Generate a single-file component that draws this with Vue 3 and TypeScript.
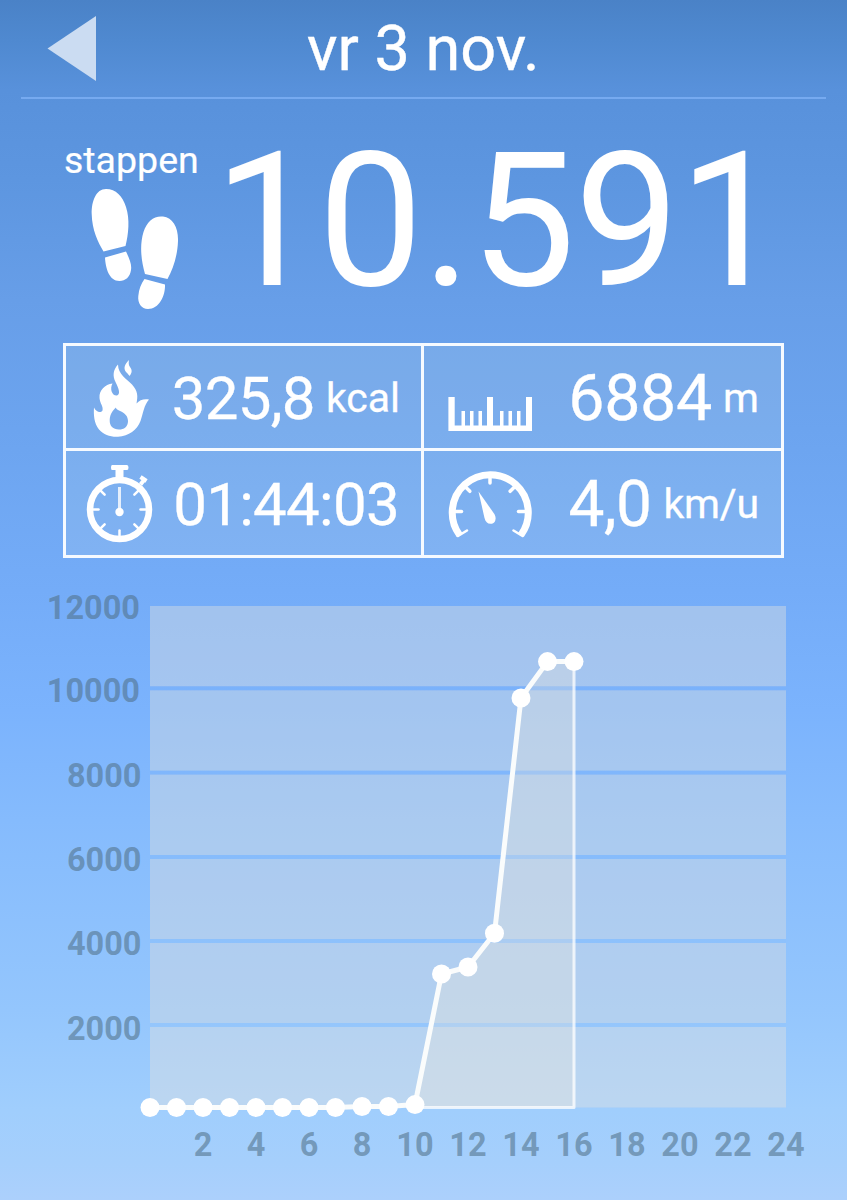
<script setup lang="ts">
interface Point { x: number; y: number }

const yLabels: { text: string; x: number; y: number }[] = [
  { text: '12000', x: 140, y: 618.5 },
  { text: '10000', x: 140, y: 702 },
  { text: '8000', x: 141.5, y: 786.5 },
  { text: '6000', x: 141.5, y: 871 },
  { text: '4000', x: 141.5, y: 955 },
  { text: '2000', x: 141.5, y: 1039.5 },
]
const hours: number[] = [2, 4, 6, 8, 10, 12, 14, 16, 18, 20, 22, 24]
const hourX = (h: number): number => 150 + h * 26.5

const bands: number[][] = [
  [606, 686.3], [690.3, 770.6], [774.6, 855], [859, 939], [943, 1023], [1027, 1107.5],
]
const levels: number[] = [
  1107.5, 1107.5, 1107.5, 1107.5, 1107.5, 1107.5, 1107.5, 1107.5, 1106.5, 1106.5,
  1104.6, 974, 967, 933.3, 698, 661.6, 661.6,
]
const points: Point[] = levels.map((y, h) => ({ x: hourX(h), y }))
const line: string = points.map(p => `${p.x},${p.y}`).join(' ')
const area: string = `${line} 574,1107.5 150,1107.5`
const dialTicks: number[] = [45, 90, 135, 180, 225, 270, 315]
const gaugeTicks: number[] = [-90, -45, 0, 45, 90]
</script>

<template>
  <main class="screen">
    <header class="header">
      <svg class="back" width="50" height="66" viewBox="0 0 50 66"><path d="M0.5 32.5 49 0V65Z" /></svg>
      <h1>vr 3 nov.</h1>
    </header>

    <section class="steps">
      <div class="steps-side">
        <span class="steps-label">stappen</span>
        <svg class="feet" width="90" height="122" viewBox="90 187 90 122">
          <path d="M106 189C96 189 91.500 201 91.700 214C92 230 98 242 103.500 251.500L125.500 246C128.500 234 130 219 126 207C122.500 196 116 189 106 189Z" />
          <path d="M105 257.500L126 251.500C129 258 132 264 131 270C130 277 125.500 281 119.500 281C109 281 105.500 268 105 257.500Z" />
          <path d="M163 216.500C173 217.500 178.500 228 178 241C177.500 256 173 269 167.500 279L145 274C141 260 139.500 245 143.500 232C147 221 154 215.500 163 216.500Z" />
          <path d="M144.500 279L165 284.500C165.500 296 159 309 148 309C141.500 309 137.500 303 138.300 296C139 289 141 284 144.500 279Z" />
        </svg>
      </div>
      <span class="total">10.591</span>
    </section>

    <section class="stats">
      <div class="cell">
        <svg class="icon" width="90" height="102" viewBox="66 346 90 102">
          <path fill-rule="evenodd" d="M118 364.500C113 370 112.500 376 115.500 382C118.500 388 121 394 117 395.500C112 396 109.500 389 112.500 383.500C105 384.500 99 390 99.500 398C100 404 103.500 406 102.500 410.500C100.500 413.500 96 412 94 407.500C93.500 415 94 423 99 429.500C104 435 110 437 118 436.700C129 436 137 430 140.500 421C143 414 144 405 149 399.500C144 398.500 139.500 400 136.500 403.500C138 396 138 391 132 384.500C127 379.500 118 374 118 364.500ZM116 407.500C115.500 411 128 411 128 421C128 427 124 429.500 119 429.500C113 429.500 109.500 426 109.700 420C110 414 113 410 116 407.500Z" />
          <path d="M129 360C125 364 123 368 126 372C128 374 129 375 129.500 376C132 373 132.500 370 130 367C128.500 365 128.500 363 129 360Z" />
        </svg>
        <span class="value v60">325,8</span><span class="unit kcal">kcal</span>
      </div>
      <div class="cell">
        <svg class="icon" width="115" height="102" viewBox="424 346 115 102">
          <path d="M448.400 397H454.700V425.500H461.500V411H465V425.500H470V411H473.500V425.500H478.500V411H482V425.500H487V397H493V425.500H500V411H503.500V425.500H508.500V411H512V425.500H517V411H520.500V425.500H526V397H532V431H448.400Z" />
        </svg>
        <span class="value v65">6884</span><span class="unit metre">m</span>
      </div>
      <div class="cell">
        <svg class="icon" width="90" height="104" viewBox="66 451 90 104">
          <circle cx="119.500" cy="509.500" r="29.500" class="ring" />
          <path d="M112 465H127Q128.500 465 128.500 467.500T127 470H123.500V479H115.500V470H112Q111 470 111 467.500T112 465Z" />
          <path class="stroke4" d="M140.500 484.500 144 480M140.500 477 146.500 481" />
          <path v-for="a in dialTicks" :key="a" class="tick" d="M119.500 482V488.500" :transform="`rotate(${a} 119.500 509.500)`" />
          <path class="hand" d="M119.500 487V509" />
          <circle cx="119.500" cy="512" r="4.200" />
        </svg>
        <span class="value v60 clock">01:44:03</span>
      </div>
      <div class="cell">
        <svg class="icon" width="115" height="104" viewBox="424 451 115 104">
          <path class="gauge" d="M459.500 535A38 38 0 1 1 521 535" />
          <path class="tick" d="M458 536 467 530.500M522.500 536 513.500 530.500" />
          <path v-for="a in gaugeTicks" :key="a" class="gtick" d="M490 475V483" :transform="`rotate(${a} 490 511.500)`" />
          <path d="M478.500 491.500 494 513.500C497 518 495.500 523 492 523.700C488 524.500 485.500 522 484.500 518Z" />
        </svg>
        <span class="value v64">4,0</span><span class="unit speed">km/u</span>
      </div>
    </section>

    <svg class="chart" width="847" height="642" viewBox="0 558 847 642">
      <rect v-for="b in bands" :key="b[0]" class="band" x="150" :y="b[0]" width="636" :height="b[1] - b[0]" />
      <rect class="gap" x="150" y="686" width="636" height="341" />
      <polygon class="area" :points="area" />
      <path class="edge" d="M574 661.500V1107.500H410" />
      <polyline class="line" :points="line" />
      <circle v-for="p in points" :key="p.x" :cx="p.x" :cy="p.y" r="9.500" class="dot" />
      <text v-for="l in yLabels" :key="l.text" class="axis end" :x="l.x" :y="l.y">{{ l.text }}</text>
      <text v-for="h in hours" :key="h" class="axis mid" :x="hourX(h)" y="1155.500">{{ h }}</text>
    </svg>
  </main>
</template>

<style>
body { margin: 0; }
</style>

<style scoped>
.screen {
  width: 847px;
  height: 1200px;
  overflow: hidden;
  color: #fff;
  font-family: Roboto, "Liberation Sans", sans-serif;
  background: linear-gradient(#4a82c7 0, #4f89d0 40px, #5891db 90px, #5d96e0 180px, #679ee8 300px, #6ca4ef 430px, #74acf8 590px, #7bb3fd 710px, #85bbfd 820px, #94c6fd 1010px, #a0cefd 1110px, #a5cffc 1160px, #acd0fc 1200px);
}
.header {
  display: flex;
  height: 97px;
  margin: 0 21px;
  border-bottom: 2px solid #76aaf0;
}
.back { margin: 16px 0 0 26px; fill: #cbdcf2; }
h1 {
  margin: 0 0 0 210px;
  font-size: 63px;
  font-weight: 400;
  line-height: 97px;
  white-space: nowrap;
  -webkit-text-stroke: .4px #fff;
}
.steps { display: flex; height: 244px; }
.steps-side { display: flex; flex-direction: column; width: 150px; padding-left: 64px; }
.steps-label { margin-top: 36px; font-size: 37.500px; line-height: 51px; -webkit-text-stroke: .2px #fff; }
.feet { margin: 1px 0 0 26px; fill: #fff; }
.total { font-size: 187px; line-height: 246px; letter-spacing: -1px; white-space: nowrap; }
.stats {
  display: grid;
  grid-template: 102px 104px / 355px 357px;
  gap: 3px;
  width: 715px;
  margin-left: 63px;
  border: 3px solid #f6faff;
  background: linear-gradient(#f6faff, #f6faff) 355px 0 / 3px 100% no-repeat, linear-gradient(#f6faff, #f6faff) 0 102px / 100% 3px no-repeat, rgba(210, 227, 227, .15);
}
.cell { display: flex; align-items: center; white-space: nowrap; -webkit-text-stroke: .3px #fff; }
.icon { flex: none; fill: #fff; }
.value { margin-left: auto; padding-top: 2px; }
.v60 { font-size: 60px; letter-spacing: -.700px; }
.v64 { font-size: 64px; letter-spacing: -.500px; }
.v65 { font-size: 64.500px; letter-spacing: -.300px; }
.unit { padding-top: 2px; font-size: 41px; }
.kcal { margin: 0 21px 0 11px; }
.metre { margin: 0 22px 0 11px; }
.speed { margin: 0 22px 0 12px; letter-spacing: -.200px; }
.clock { margin-right: 22px; }
.ring { fill: none; stroke: #fff; stroke-width: 6.500; }
.stroke4 { fill: none; stroke: #fff; stroke-width: 4; }
.tick, .gtick { fill: none; stroke: #fff; stroke-width: 2.500; stroke-linecap: round; }
.gtick { stroke-width: 3.500; }
.hand { stroke: #fff; stroke-width: 3; opacity: .8; }
.gauge { fill: none; stroke: #fff; stroke-width: 7; }
.chart { display: block; }
.band { fill: rgba(231, 228, 222, .4); }
.gap { fill: rgba(120, 175, 235, .04); }
.area { fill: rgba(238, 232, 217, .3); }
.edge { fill: none; stroke: #fff; stroke-opacity: .75; stroke-width: 3; stroke-linejoin: round; }
.line { fill: none; stroke: #fafcfc; stroke-width: 5; stroke-linejoin: round; }
.dot { fill: #fff; }
.axis { font-size: 32.500px; font-weight: 700; fill: rgba(80, 112, 135, .58); }
.end { text-anchor: end; }
.mid { text-anchor: middle; }
</style>
